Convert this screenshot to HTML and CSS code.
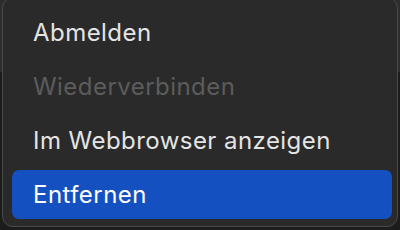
FILE: index.html
```html
<!DOCTYPE html>
<html lang="de">
<head>
<meta charset="utf-8">
<link rel="stylesheet" href="styles.css">
</head>
<body>
<div class="menu">
  <div class="item">Abmelden</div>
  <div class="item disabled">Wiederverbinden</div>
  <div class="item">Im Webbrowser anzeigen</div>
  <div class="item active">Entfernen</div>
</div>
</body>
</html>
```
FILE: styles.css
```css
html, body {
  margin: 0;
  padding: 0;
  width: 400px;
  height: 230px;
  overflow: hidden;
}
body {
  background: linear-gradient(to bottom, #2e2e2e 0, #2e2e2e 72px, #1c1c1c 72px);
  font-family: Inter, "Noto Sans", sans-serif;
}
.menu {
  box-sizing: border-box;
  margin: -3px 0 0 2px;
  width: 396px;
  height: 230px;
  background: #2a2a2a;
  border: 1px solid #4a4a4a;
  border-radius: 11px;
  padding: 10px 5px 7px 9px;
  display: flex;
  flex-direction: column;
  gap: 5px;
}
.item {
  height: 49px;
  flex: none;
  display: flex;
  align-items: center;
  padding-left: 21px;
  border-radius: 7px;
  font-size: 24px;
  letter-spacing: 0.45px;
  color: #e4e4e4;
}
.item.disabled {
  color: #5c5c5c;
}
.item.active {
  background: #1450c0;
  color: #ffffff;
}
```
